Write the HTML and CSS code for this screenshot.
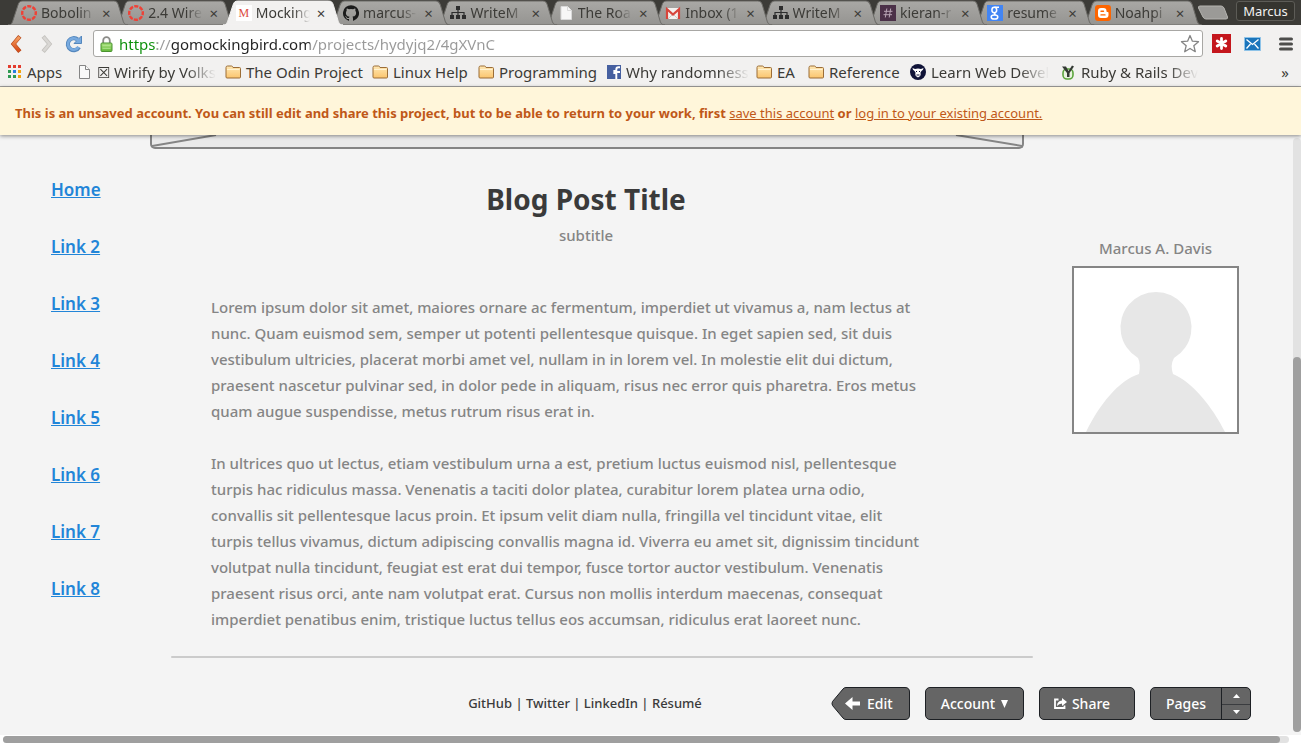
FILE: index.html
```
<!DOCTYPE html>
<html lang="en">
<head>
<meta charset="utf-8">
<title>Mockingbird</title>
<link rel="stylesheet" href="styles.css">
</head>
<body>
<svg class="defs" aria-hidden="true">
  <linearGradient id="tabfill" x1="0" y1="0" x2="0" y2="1"><stop offset="0" stop-color="#a9a8a5"/><stop offset="1" stop-color="#959491"/></linearGradient>
  <linearGradient id="folderfill" x1="0" y1="0" x2="0" y2="1"><stop offset="0" stop-color="#ffe8b4"/><stop offset="1" stop-color="#fbc56e"/></linearGradient>
  <linearGradient id="lockfill" x1="0" y1="0" x2="0" y2="1"><stop offset="0" stop-color="#a8e07c"/><stop offset="1" stop-color="#63b83a"/></linearGradient>
  <linearGradient id="backfill" x1="0" y1="0" x2="0" y2="1"><stop offset="0" stop-color="#f39a5c"/><stop offset="1" stop-color="#d94f1c"/></linearGradient>
  <symbol id="tab" viewBox="0 0 121 24" preserveAspectRatio="none"><path d="M0 24c3 0 3.500-1 4.500-3L10 5C11 2 12 1 15 1H106c3 0 4 1 5 4l5 16c1 2 2 3 5 3z" vector-effect="non-scaling-stroke"/></symbol>
  <symbol id="ring" viewBox="0 0 16 16"><circle cx="8" cy="8" r="6.800" fill="none" stroke="#ef4136" stroke-width="2.400" stroke-dasharray="4.100 1.241" stroke-dashoffset="2"/></symbol>
  <symbol id="sitemap" viewBox="0 0 16 16"><path d="M6 1h4v4H6zM0 10h4v4H0zM6 10h4v4H6zM12 10h4v4h-4z" fill="#2d2d2d"/><path d="M8 5v5M2 10V7.500h12V10" fill="none" stroke="#2d2d2d" stroke-width="1.200"/></symbol>
  <symbol id="page" viewBox="0 0 16 16"><path d="M3 1.500h6.500l4 4v9H3z"/><path d="M9.500 1.500v4h4"/></symbol>
  <symbol id="folder" viewBox="0 0 16 16"><path d="M1 13V3.500Q1 2 2.500 2h4Q7.500 2 8 3.500h6.500q1 0 1 1V13q0 1-1 1H2q-1 0-1-1z" fill="url(#folderfill)" stroke="#9b6d37"/><path d="M2 5.500h12.500" stroke="#fff3d2"/></symbol>
</svg>

<header class="browser">
  <div class="strip">
    <nav class="tabs" aria-label="Tabs">
      <div class="tab"><svg class="shape"><use href="#tab"/></svg><svg class="ico"><use href="#ring"/></svg><span class="name">Bobolin</span><button class="x" aria-label="Close">×</button></div>
      <div class="tab"><svg class="shape"><use href="#tab"/></svg><svg class="ico"><use href="#ring"/></svg><span class="name">2.4 Wire</span><button class="x" aria-label="Close">×</button></div>
      <div class="tab active"><svg class="shape"><use href="#tab"/></svg><span class="ico mock">M</span><span class="name">Mocking</span><button class="x" aria-label="Close">×</button></div>
      <div class="tab"><svg class="shape"><use href="#tab"/></svg><svg class="ico" viewBox="0 0 16 16"><path fill="#1b1b1b" d="M8 .2a8 8 0 0 0-2.530 15.590c.4.070.55-.17.550-.38v-1.490c-2.230.49-2.700-.94-2.700-.94-.36-.93-.89-1.170-.89-1.170-.73-.5.050-.49.050-.49.810.060 1.230.83 1.230.83.72 1.230 1.880.87 2.340.66.070-.52.280-.87.510-1.070-1.780-.2-3.650-.89-3.650-3.950 0-.87.310-1.590.82-2.150-.08-.2-.36-1.020.080-2.120 0 0 .67-.21 2.200.82a7.700 7.700 0 0 1 4 0c1.530-1.030 2.200-.82 2.200-.82.44 1.100.16 1.920.080 2.120.51.560.82 1.280.82 2.150 0 3.070-1.870 3.750-3.650 3.950.29.250.54.730.54 1.480v2.200c0 .21.150.46.550.38A8 8 0 0 0 8 .2z"/></svg><span class="name">marcus-</span><button class="x" aria-label="Close">×</button></div>
      <div class="tab"><svg class="shape"><use href="#tab"/></svg><svg class="ico"><use href="#sitemap"/></svg><span class="name">WriteM</span><button class="x" aria-label="Close">×</button></div>
      <div class="tab"><svg class="shape"><use href="#tab"/></svg><svg class="ico paper"><use href="#page"/></svg><span class="name">The Roa</span><button class="x" aria-label="Close">×</button></div>
      <div class="tab"><svg class="shape"><use href="#tab"/></svg><svg class="ico" viewBox="0 0 16 16"><path fill="#f3f1ee" d="M1 3h14v11H1z"/><path d="M3 14l5-5 5 5" fill="none" stroke="#cfcac6"/><path d="M2 14V4.200L8 9.500l6-5.300V14" fill="none" stroke="#d8453b" stroke-width="2.200"/></svg><span class="name">Inbox (1</span><button class="x" aria-label="Close">×</button></div>
      <div class="tab"><svg class="shape"><use href="#tab"/></svg><svg class="ico"><use href="#sitemap"/></svg><span class="name">WriteM</span><button class="x" aria-label="Close">×</button></div>
      <div class="tab"><svg class="shape"><use href="#tab"/></svg><svg class="ico" viewBox="0 0 16 16"><path fill="#4b3048" d="M0 0h16v16H0z"/><path d="M6.800 3.500l-1.500 9M10.700 3.500l-1.500 9M4 6.300h8.500M3.500 9.700H12" stroke="#b9a5b6" fill="none"/></svg><span class="name">kieran-r</span><button class="x" aria-label="Close">×</button></div>
      <div class="tab"><svg class="shape"><use href="#tab"/></svg><svg class="ico" viewBox="0 0 16 16"><path fill="#4285f4" d="M0 0h16v16H0z"/><g fill="none" stroke="#fff" stroke-width="1.500"><ellipse cx="7.300" cy="5" rx="2.400" ry="2.700"/><path d="M7.500 2.200H12M8.500 7.600q-2 1.200 0 2.200"/><ellipse cx="7.500" cy="12" rx="3.300" ry="2.100"/></g></svg><span class="name">resume</span><button class="x" aria-label="Close">×</button></div>
      <div class="tab"><svg class="shape"><use href="#tab"/></svg><svg class="ico" viewBox="0 0 16 16"><rect width="16" height="16" rx="3" fill="#fd6500"/><path fill="#fff" d="M6 3h2.500a3 3 0 0 1 3 3c0 .8.300 1 1 1s1 .4 1 1v2a3 3 0 0 1-3 3H6a3 3 0 0 1-3-3V6a3 3 0 0 1 3-3z"/><path d="M6 6.200h2.500M6 9.900h4" stroke="#fd6500" stroke-width="1.400" stroke-linecap="round"/></svg><span class="name">Noahpi</span><button class="x" aria-label="Close">×</button></div>
    </nav>
    <button class="newtab" aria-label="New tab"><svg width="32" height="15" viewBox="0 0 32 15"><path d="M3 1h21q2 0 3 2l3.500 9q.5 2-1.500 2H9q-2 0-3-2L1.500 3Q1 1 3 1z" fill="#9b9a97" stroke="#b5b4b0"/></svg></button>
    <button class="profile">Marcus</button>
  </div>

  <div class="toolbar">
    <button class="tool" aria-label="Back"><svg width="14" height="18" viewBox="0 0 14 18"><path d="M9.500 3L4.500 9l5 6" fill="none" stroke="#b64a1d" stroke-width="4.200" stroke-linecap="square"/><path d="M9.500 3L4.500 9l5 6" fill="none" stroke="url(#backfill)" stroke-width="3" stroke-linecap="square"/></svg></button>
    <button class="tool" aria-label="Forward"><svg width="14" height="18" viewBox="0 0 14 18"><path d="M4.500 3l5 6-5 6" fill="none" stroke="#c4c2be" stroke-width="4.200" stroke-linecap="square"/><path d="M4.500 3l5 6-5 6" fill="none" stroke="#d9d7d4" stroke-width="2.600" stroke-linecap="square"/></svg></button>
    <button class="tool" aria-label="Reload"><svg width="18" height="18" viewBox="0 0 18 18"><path d="M14 12.200A6 6 0 1 1 12.600 4.500" fill="none" stroke="#5487bd" stroke-width="4.200"/><path d="M16.500 1v7.500H9z" fill="#78aadf" stroke="#5487bd"/><path d="M13.600 11.900A5.700 5.700 0 1 1 12.400 4.700l1.500 1.500" fill="none" stroke="#78aadf" stroke-width="2.600"/></svg></button>
    <div class="omnibox">
      <svg width="13" height="16" viewBox="0 0 13 16"><path d="M3.200 8V4.500a3.300 3.300 0 0 1 6.600 0V8" fill="none" stroke="#8b8b88" stroke-width="1.800"/><rect x="1" y="7" width="11" height="8.500" rx="1" fill="url(#lockfill)" stroke="#4b9330"/><path d="M2.500 9.700h8M2.500 12.300h8" stroke="#bdeb9c" stroke-width=".8"/></svg>
      <input class="url" type="text" aria-label="Address" spellcheck="false" value="https://gomockingbird.com/projects/hydyjq2/4gXVnC">
      <button class="tool" aria-label="Bookmark this page"><svg width="20" height="20" viewBox="0 0 20 20"><path d="M10 1.500l2.400 5.700 6.100.5-4.700 4 1.500 6L10 14.500l-5.300 3.200 1.500-6-4.700-4 6.100-.5z" fill="#fff" stroke="#858585" stroke-width="1.300" stroke-linejoin="round"/></svg></button>
    </div>
    <button class="tool" aria-label="LastPass"><svg width="19" height="19" viewBox="0 0 19 19"><path fill="#c4161c" d="M0 0h19v19H0z"/><path d="M9.500 4.500v10M5.200 7l8.600 5M13.800 7l-8.600 5" stroke="#fff" stroke-width="2.800" stroke-linecap="round"/></svg></button>
    <button class="tool mail" aria-label="Mail"><svg width="17" height="14" viewBox="0 0 17 14"><path fill="#1b75bb" stroke="#8ec3e8" d="M.5.5h16v13H.5z"/><path d="M2.500 2.500l6 5 6-5M2.500 11.500L6.500 7M14.500 11.500L10.500 7" fill="none" stroke="#fff" stroke-width="1.300"/></svg></button>
    <button class="tool" aria-label="Menu"><svg width="14" height="14" viewBox="0 0 14 14"><path d="M1.500 2h11M1.500 7h11M1.500 12h11" stroke="#4d4d4b" stroke-width="3" stroke-linecap="round"/></svg></button>
  </div>

  <nav class="bookmarks" aria-label="Bookmarks">
    <a href="#"><svg class="small" viewBox="0 0 14 14"><path fill="#e33c2e" d="M0 0h3v3H0zM5 0h3v3H5zM10 0h3v3h-3z"/><path fill="#2f9a52" d="M0 5h3v3H0zM0 10h3v3H0z"/><path fill="#2a7de1" d="M5 5h3v3H5z"/><path fill="#f2a30f" d="M10 5h3v3h-3zM10 10h3v3h-3z"/><path fill="#2f9a52" d="M5 10h3v3H5z"/></svg><span>Apps</span></a>
    <a href="#"><svg class="small outline" viewBox="0 0 14 14"><path d="M1.500.5h6l4 4v9h-10z"/><path d="M7.500.5v4h4"/></svg><span class="fade">☒ Wirify by Volks</span></a>
    <a href="#"><svg class="ico"><use href="#folder"/></svg><span>The Odin Project</span></a>
    <a href="#"><svg class="ico"><use href="#folder"/></svg><span>Linux Help</span></a>
    <a href="#"><svg class="ico"><use href="#folder"/></svg><span>Programming</span></a>
    <a href="#"><svg class="small" viewBox="0 0 14 14"><path fill="#4660a0" d="M0 0h14v14H0z"/><path d="M9.300 14V8h-2V6h2V4.500q0-2.300 2.200-2.300H13M9 7h4" fill="none" stroke="#fff" stroke-width="1.900"/></svg><span class="fade">Why randomness</span></a>
    <a href="#"><svg class="ico"><use href="#folder"/></svg><span>EA</span></a>
    <a href="#"><svg class="ico"><use href="#folder"/></svg><span>Reference</span></a>
    <a href="#"><svg class="ico" viewBox="0 0 16 16"><circle cx="8" cy="8" r="8" fill="#101338"/><path fill="#fff" d="M2.500 4l2.500 1q3-1 6 0l2.500-1q0 2-2 3l-1 1.500q.5 2-.3 3.500l-2.200 1.500L5.800 12q-.8-1.500-.3-3.500l-1-1.500q-2-1-2-3z"/><path d="M6 7.500h1M9 7.500h1M6.500 11h3" stroke="#101338"/></svg><span class="fade">Learn Web Devel</span></a>
    <a href="#"><svg class="ico" viewBox="0 0 16 16"><rect x="3" y="5" width="10" height="10" rx="4" fill="#e9f3e0" stroke="#5ba53c" stroke-width="1.600"/><path d="M2 2.500h4l2.500 4.500L12 1.500l2 1L9.500 9v4H7V9z" fill="#343a34"/></svg><span class="fade">Ruby &amp; Rails Deve</span></a>
    <button class="more" aria-label="More bookmarks">»</button>
  </nav>
</header>

<p class="notice"><strong>This is an unsaved account. You can still edit and share this project, but to be able to return to your work, first</strong> <a href="#">save this account</a> <strong>or</strong> <a href="#">log in to your existing account.</a></p>

<div class="viewport">
  <div class="canvas">
    <nav class="links" aria-label="Site">
      <a href="#">Home</a><a href="#">Link 2</a><a href="#">Link 3</a><a href="#">Link 4</a><a href="#">Link 5</a><a href="#">Link 6</a><a href="#">Link 7</a><a href="#">Link 8</a>
    </nav>
    <main class="post">
      <div class="hero"><svg viewBox="0 0 870 12" preserveAspectRatio="none"><path d="M0 11L64 0M870 11L804 0" stroke="#858585" stroke-width="2"/></svg></div>
      <article>
        <h1>Blog Post Title</h1>
        <p class="subtitle">subtitle</p>
        <div class="text">
          <p>Lorem ipsum dolor sit amet, maiores ornare ac fermentum, imperdiet ut vivamus a, nam lectus at<br>nunc. Quam euismod sem, semper ut potenti pellentesque quisque. In eget sapien sed, sit duis<br>vestibulum ultricies, placerat morbi amet vel, nullam in in lorem vel. In molestie elit dui dictum,<br>praesent nascetur pulvinar sed, in dolor pede in aliquam, risus nec error quis pharetra. Eros metus<br>quam augue suspendisse, metus rutrum risus erat in.</p>
          <p>In ultrices quo ut lectus, etiam vestibulum urna a est, pretium luctus euismod nisl, pellentesque<br>turpis hac ridiculus massa. Venenatis a taciti dolor platea, curabitur lorem platea urna odio,<br>convallis sit pellentesque lacus proin. Et ipsum velit diam nulla, fringilla vel tincidunt vitae, elit<br>turpis tellus vivamus, dictum adipiscing convallis magna id. Viverra eu amet sit, dignissim tincidunt<br>volutpat nulla tincidunt, feugiat est erat dui tempor, fusce tortor auctor vestibulum. Venenatis<br>praesent risus orci, ante nam volutpat erat. Cursus non mollis interdum maecenas, consequat<br>imperdiet penatibus enim, tristique luctus tellus eos accumsan, ridiculus erat laoreet nunc.</p>
        </div>
      </article>
      <hr>
      <footer>GitHub | Twitter | LinkedIn | Résumé</footer>
    </main>
    <aside class="author">
      <p>Marcus A. Davis</p>
      <svg class="avatar" viewBox="0 0 163 164"><path fill="#e7e7e7" d="M12 164C26 136 44 113 65 106Q67 96 64 90A35.500 35.500 0 1 1 100 90Q96 97 99 106C118 114 138 138 151 164z"/></svg>
    </aside>
    <div class="actions">
      <button class="edit"><svg class="edge" width="79" height="33" viewBox="0 0 79 33"><path d="M15 .5H74q4.500 0 4.500 4.500v23q0 4.500-4.500 4.500H15q-2 0-3-1.500L1.500 18.500q-1-2 0-4L12 2q1-1.500 3-1.500z" fill="#656565" stroke="#1d2024"/></svg><svg class="arrow" width="15" height="13" viewBox="0 0 15 13"><path d="M0 6.500L7.500 0v4.500H15v4H7.500V13z" fill="#fff"/></svg><span>Edit</span></button>
      <button class="btn account">Account <svg width="7" height="8" viewBox="0 0 7 8"><path d="M0 0h7L3.500 8z" fill="#fff"/></svg></button>
      <button class="btn share"><svg width="13" height="11" viewBox="0 0 13 11"><path d="M4.500 1.500H1v8.500h9.500V7.500" fill="none" stroke="#fff" stroke-width="1.800"/><path d="M8 0l5 4-5 4V5.500Q5 5.500 3 8 3 3 8 2.500z" fill="#fff"/></svg>Share</button>
      <div class="btn pages"><button class="label">Pages</button><div class="steps"><button aria-label="Previous page"><svg width="7" height="4" viewBox="0 0 7 4"><path d="M0 4h7L3.500 0z" fill="#fff"/></svg></button><button aria-label="Next page"><svg width="7" height="4" viewBox="0 0 7 4"><path d="M0 0h7L3.500 4z" fill="#fff"/></svg></button></div></div>
    </div>
  </div>
  <div class="vbar"><div class="thumb"></div></div>
</div>
<div class="hbar"><div class="thumb"></div></div>
</body>
</html>
```
FILE: styles.css
```
* { box-sizing: border-box; }
body {
  margin: 0;
  min-height: 100vh;
  display: flex;
  flex-direction: column;
  background: #fff;
  font: 500 15px/26px "Noto Sans", sans-serif;
  color: #858585;
}
button { padding: 0; border: 0; background: none; font: inherit; color: inherit; }
p, h1 { margin: 0; }
svg { display: block; flex: none; }
.defs { position: absolute; width: 0; height: 0; }
.ico { width: 16px; height: 16px; flex: none; }
.small { width: 14px; height: 14px; flex: none; }

/* Browser frame */
.browser {
  background: #f2f1f0;
  border-bottom: 1px solid #a3a29f;
  font-weight: 400;
  color: #3c3b37;
}
.strip { display: flex; align-items: flex-start; height: 25px; padding: 0 6px 0 8px; background: #3c3b37; }
.tabs { flex: 1; display: grid; grid-template-columns: repeat(11, minmax(0, 1fr)); height: 25px; }
.tab { position: relative; display: flex; align-items: center; gap: 4px; padding: 1px 2px 0 13px; height: 25px; font-size: 14px; }
.tab:nth-child(1) { z-index: 11; }
.tab:nth-child(2) { z-index: 10; }
.tab.active { z-index: 12; }
.tab:nth-child(4) { z-index: 8; }
.tab:nth-child(5) { z-index: 7; }
.tab:nth-child(6) { z-index: 6; }
.tab:nth-child(7) { z-index: 5; }
.tab:nth-child(8) { z-index: 4; }
.tab:nth-child(9) { z-index: 3; }
.tab:nth-child(10) { z-index: 2; }
.tab:nth-child(11) { z-index: 1; }
.shape { position: absolute; left: 0; top: 0; width: calc(100% + 13px); height: 25px; fill: url(#tabfill); stroke: #6b6a66; stroke-width: 1px; }
.active .shape { fill: #f2f1f0; stroke: #f2f1f0; }
.tab .ico, .tab .name, .tab .x { position: relative; }
.name {
  flex: 1;
  min-width: 0;
  overflow: hidden;
  white-space: nowrap;
  -webkit-mask-image: linear-gradient(90deg, #000 70%, transparent);
  mask-image: linear-gradient(90deg, #000 70%, transparent);
}
.x { width: 14px; font-size: 15px; line-height: 20px; text-align: center; }
.mock { background: #fff; color: #dc4b41; font: 12px/16px "Liberation Serif", serif; text-align: center; }
.paper { fill: #f7f7f7; stroke: #d9d9d9; }
.outline { fill: #f9f9f9; stroke: #858585; }
.newtab { margin: 5px 7px 0 8px; }
.profile {
  width: 59px;
  height: 20px;
  margin-top: 1px;
  border: 1px solid #5d5c57;
  border-radius: 3px;
  background: #35342f;
  color: #f2f1f0;
  font-size: 13px;
  line-height: 18px;
}

.toolbar { display: flex; align-items: center; gap: 10px; height: 34px; padding: 3px 8px 0 9px; }
.tool { flex: none; }
.toolbar > .tool:nth-child(2) { margin-left: 7px; }
.toolbar > .tool:nth-child(3) { margin-left: 1px; }
.omnibox {
  flex: 1;
  display: flex;
  align-items: center;
  height: 27px;
  gap: 6px;
  padding: 0 2px 0 6px;
  border: 1px solid #a8a7a4;
  border-radius: 3px;
  background: #fff;
}
.url {
  flex: 1;
  min-width: 0;
  height: 24px;
  padding: 0;
  border: 0;
  outline: 0;
  font: 15px/24px "Noto Sans", sans-serif;
  color: transparent;
  background: linear-gradient(90deg, #0a8f08 0 38px, #999 38px 52px, #222 52px 191px, #999 191px);
  -webkit-background-clip: text;
  background-clip: text;
}
.omnibox + .tool { margin-left: -1px; margin-right: 3px; }
.mail { margin-right: 8px; }

.bookmarks {
  display: grid;
  grid-template-columns: 70px 147px 147px 106px 129px 149px 52px 102px 150px 138px 1fr;
  align-items: center;
  height: 27px;
  padding: 0 12px 2px 8px;
}
.bookmarks a { display: flex; align-items: center; gap: 5px; min-width: 0; color: inherit; text-decoration: none; white-space: nowrap; line-height: 22px; }
.fade {
  overflow: hidden;
  -webkit-mask-image: linear-gradient(90deg, #000 75%, transparent);
  mask-image: linear-gradient(90deg, #000 75%, transparent);
}
.more { justify-self: end; }

/* Account notice */
.notice {
  position: relative;
  z-index: 1;
  padding: 13px 15px 9px;
  background: #fff6da;
  box-shadow: 0 1px 4px rgba(0, 0, 0, .45);
  color: #bf5818;
  font-size: 13px;
  font-weight: 400;
}
.notice a { color: inherit; }

/* Mockup */
.viewport { flex: 1; display: flex; background: #f4f4f4; }
.canvas {
  position: relative;
  flex: 1;
  display: grid;
  grid-template-columns: 150px minmax(0, 1fr) 259px;
}
.links { display: flex; flex-direction: column; align-items: flex-start; gap: 31px; padding: 42px 0 0 51px; font-size: 17px; font-weight: 600; }
.links a { color: #2285d8; }
.hero { height: 14px; margin-right: 9px; border: 2px solid #858585; border-top: 0; border-radius: 0 0 5px 5px; background: #eaeaea; }
.hero svg { width: 100%; height: 12px; }
article { padding: 30px 11px 0 0; }
h1 { font-size: 28px; line-height: 40px; font-weight: 700; color: #3a3a3a; text-align: center; }
.subtitle { margin-top: 3px; text-align: center; }
.text { display: grid; gap: 26px; padding: 46px 0 0 61px; white-space: nowrap; }
hr { height: 2px; margin: 24px 0 0 21px; border: 0; border-radius: 1px; background: #cbcbcb; }
footer { margin-top: 32px; padding-right: 13px; font-size: 13px; color: #3a3a3a; text-align: center; }
.author { width: 167px; margin: 100px 0 0 39px; text-align: center; }
.avatar { width: 100%; height: 168px; margin-top: 5px; border: 2px solid #858585; background: #fff; }

.actions { position: absolute; right: 41px; bottom: 15px; display: flex; gap: 15px; height: 33px; color: #fff; font-size: 14px; line-height: 31px; }
.edit { position: relative; display: flex; align-items: center; gap: 7px; width: 79px; padding-left: 14px; }
.edge { position: absolute; left: 0; top: 0; }
.arrow, .edit span { position: relative; }
.btn { display: flex; align-items: center; justify-content: center; gap: 6px; border: 1px solid #1d2024; border-radius: 5px; background: #656565; }
.account { width: 99px; }
.share { width: 96px; gap: 5px; padding-right: 10px; }
.pages { width: 101px; gap: 0; align-items: stretch; }
.label { flex: 1; }
.steps { width: 29px; display: grid; grid-template-rows: 1fr 1fr; border-left: 1px solid #1d2024; }
.steps button { display: grid; place-items: center; }
.steps button + button { border-top: 1px solid #3a3c3f; }

/* Scrollbars */
.vbar { width: 8px; margin: 3px 0 3px 1px; padding-top: 219px; border-radius: 4px; background: #e2e2e2; display: flex; }
.vbar .thumb { flex: 1; border-radius: 4px; background: #9f9f9f; }
.hbar { height: 7px; margin: 1px 12px 1px 3px; padding-right: 9px; border-radius: 4px; background: #e2e2e2; display: flex; }
.hbar .thumb { flex: 1; border-radius: 4px; background: #9f9f9f; }
```
